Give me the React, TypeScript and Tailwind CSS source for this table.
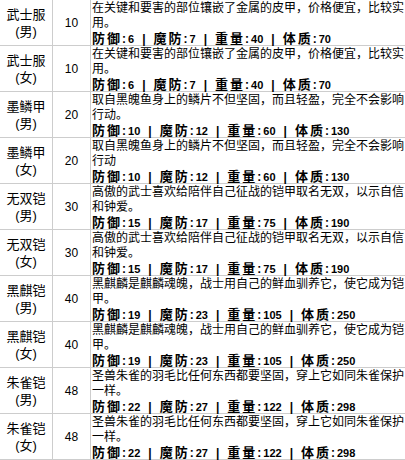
const rows = [
  { name: "武士服", sex: "男", lv: 10, desc: "在关键和要害的部位镶嵌了金属的皮甲，价格便宜，比较实用。", stats: ["6", "7", "40", "70"] },
  { name: "武士服", sex: "女", lv: 10, desc: "在关键和要害的部位镶嵌了金属的皮甲，价格便宜，比较实用。", stats: ["6", "7", "40", "70"] },
  { name: "墨鳞甲", sex: "男", lv: 20, desc: "取自黑魄鱼身上的鳞片不但坚固，而且轻盈，完全不会影响行动。", stats: ["10", "12", "60", "130"] },
  { name: "墨鳞甲", sex: "女", lv: 20, desc: "取自黑魄鱼身上的鳞片不但坚固，而且轻盈，完全不会影响行动", stats: ["10", "12", "60", "130"] },
  { name: "无双铠", sex: "男", lv: 30, desc: "高傲的武士喜欢给陪伴自己征战的铠甲取名无双，以示自信和钟爱。", stats: ["15", "17", "75", "190"] },
  { name: "无双铠", sex: "女", lv: 30, desc: "高傲的武士喜欢给陪伴自己征战的铠甲取名无双，以示自信和钟爱。", stats: ["15", "17", "75", "190"] },
  { name: "黑麒铠", sex: "男", lv: 40, desc: "黑麒麟是麒麟魂魄，战士用自己的鲜血驯养它，使它成为铠甲。", stats: ["19", "23", "105", "250"] },
  { name: "黑麒铠", sex: "女", lv: 40, desc: "黑麒麟是麒麟魂魄，战士用自己的鲜血驯养它，使它成为铠甲。", stats: ["19", "23", "105", "250"] },
  { name: "朱雀铠", sex: "男", lv: 48, desc: "圣兽朱雀的羽毛比任何东西都要坚固，穿上它如同朱雀保护一样。", stats: ["22", "27", "122", "298"] },
  { name: "朱雀铠", sex: "女", lv: 48, desc: "圣兽朱雀的羽毛比任何东西都要坚固，穿上它如同朱雀保护一样。", stats: ["22", "27", "122", "298"] },
];

const labels = ["防御", "魔防", "重量", "体质"];

export default function App() {
  return (
    <div
      className="w-[405px] h-[460px] overflow-hidden bg-white text-black"
      style={{ fontFamily: '"Liberation Sans", "Noto Sans CJK SC", sans-serif' }}
    >
      <div className="flex flex-col w-[440px]">
        {rows.map((r, i) => (
          <div key={i} className="flex h-[46px] border-b border-[#cdcdcd]">
            {/* name */}
            <div className="w-[53px] shrink-0 border-r border-[#cdcdcd] flex flex-col items-center justify-center text-[13px] leading-[17px] pt-[1px]">
              <span>{r.name}</span>
              <span>({r.sex})</span>
            </div>
            {/* level */}
            <div className="w-[38px] shrink-0 border-r border-[#cdcdcd] flex items-center justify-center text-[12px] pt-[1px]">
              {r.lv}
            </div>
            {/* description */}
            <div className="w-[318px] shrink-0 pl-[1px] text-[12px] leading-[15px] pt-[1px]">
              <p>{r.desc}</p>
              <p className="font-bold whitespace-nowrap flex items-baseline">
                {labels.map((l, j) => (
                  <span key={j} className="flex items-baseline">
                    <span className="text-[13px] tracking-[2px]">{l}</span>
                    <span className="text-[12px] pr-[2px]">:</span>
                    <span className="text-[11px]">{r.stats[j]}</span>
                    {j < 3 && <span className="text-[12px] px-[8px]">|</span>}
                  </span>
                ))}
              </p>
            </div>
          </div>
        ))}
      </div>
    </div>
  );
}
